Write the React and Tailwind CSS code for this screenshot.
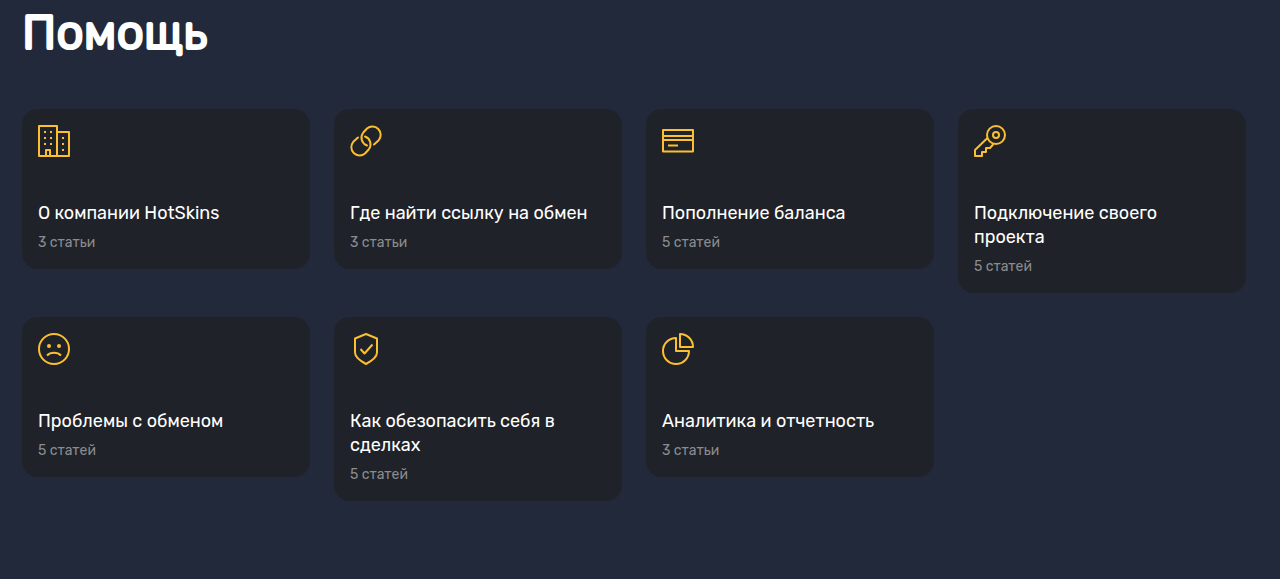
import React from 'react';

const BuildingIcon = () => (
  <>
    <path d="M1 1h18v30H1zM19 7h12v24H19M8 31v-6h4v6" />
    <path d="M6 7h2M12 7h2M6 13h2M12 13h2M6 19h2M12 19h2M24 13h2M24 19h2M24 25h2" />
  </>
);

const ChainIcon = () => (
  <g strokeLinecap="round">
    <path d="M17 20.500A8.300 8.300 0 0 1 13.300 7.500l3.700-4a8.300 8.300 0 0 1 11.700 11.700L24 19.500" />
    <path d="M15 11.500A8.300 8.300 0 0 1 18.700 24.500l-3.700 4A8.300 8.300 0 0 1 3.300 16.800L8 12.500" />
  </g>
);

const CardIcon = () => (
  <path d="M1 5h30v21.500H1zM1 11h30M1 15h30M6 20.500h10" />
);

const KeyIcon = () => (
  <>
    <circle cx="22" cy="10" r="9" />
    <circle cx="22" cy="10" r="3" />
    <path d="M13.500 13L1 25v6h7v-4h4v-4h4l3.500-4" />
  </>
);

const SadIcon = () => (
  <>
    <circle cx="16" cy="16" r="15" />
    <path d="M9 22.500c3.500-3.700 10.500-3.700 14 0" />
    <circle cx="11" cy="13" r="2" fill="currentColor" stroke="none" />
    <circle cx="21" cy="13" r="2" fill="currentColor" stroke="none" />
  </>
);

const ShieldIcon = () => (
  <>
    <path d="M16 1L27 5.500v14c0 4.500-5.500 8.500-11 11.500C10.500 28 5 24 5 19.500v-14z" />
    <path d="M10.500 16l4 4.500 8-9" />
  </>
);

const PieIcon = () => (
  <>
    <path d="M14 5A13 13 0 1 0 27 18H14z" />
    <path d="M18 1v13h13A13 13 0 0 0 18 1z" />
  </>
);

const categories = [
  { title: 'О компании HotSkins', count: '3 статьи', Icon: BuildingIcon },
  { title: 'Где найти ссылку на обмен', count: '3 статьи', Icon: ChainIcon },
  { title: 'Пополнение баланса', count: '5 статей', Icon: CardIcon },
  { title: 'Подключение своего проекта', count: '5 статей', Icon: KeyIcon },
  { title: 'Проблемы с обменом', count: '5 статей', Icon: SadIcon },
  { title: 'Как обезопасить себя в сделках', count: '5 статей', Icon: ShieldIcon },
  { title: 'Аналитика и отчетность', count: '3 статьи', Icon: PieIcon },
];

function CategoryCard({ title, count, Icon }) {
  return (
    <a href="#" className="block rounded-2xl bg-[#1f2228] p-4">
      <svg
        viewBox="0 0 32 32"
        fill="none"
        stroke="currentColor"
        strokeWidth="2"
        strokeLinejoin="round"
        className="mb-11 size-8 text-[#fbbf2f]"
        aria-hidden="true"
      >
        <Icon />
      </svg>
      <h2 className="text-lg leading-6 text-white">{title}</h2>
      <p className="mt-2 text-sm text-[#8b8c8f]">{count}</p>
    </a>
  );
}

export default function App() {
  return (
    <main className="min-h-screen bg-[#22293a] pt-1 pr-[34px] pb-10 pl-[22px] font-['Rubik','Roboto',sans-serif]">
      <h1 className="mb-12 text-5xl leading-[57px] font-normal text-white [-webkit-text-stroke:2px_white]">Помощь</h1>

      {/* Categories */}
      <div className="grid grid-cols-1 items-start gap-6 sm:grid-cols-2 lg:grid-cols-4">
        {categories.map((category) => (
          <CategoryCard key={category.title} {...category} />
        ))}
      </div>
    </main>
  );
}
